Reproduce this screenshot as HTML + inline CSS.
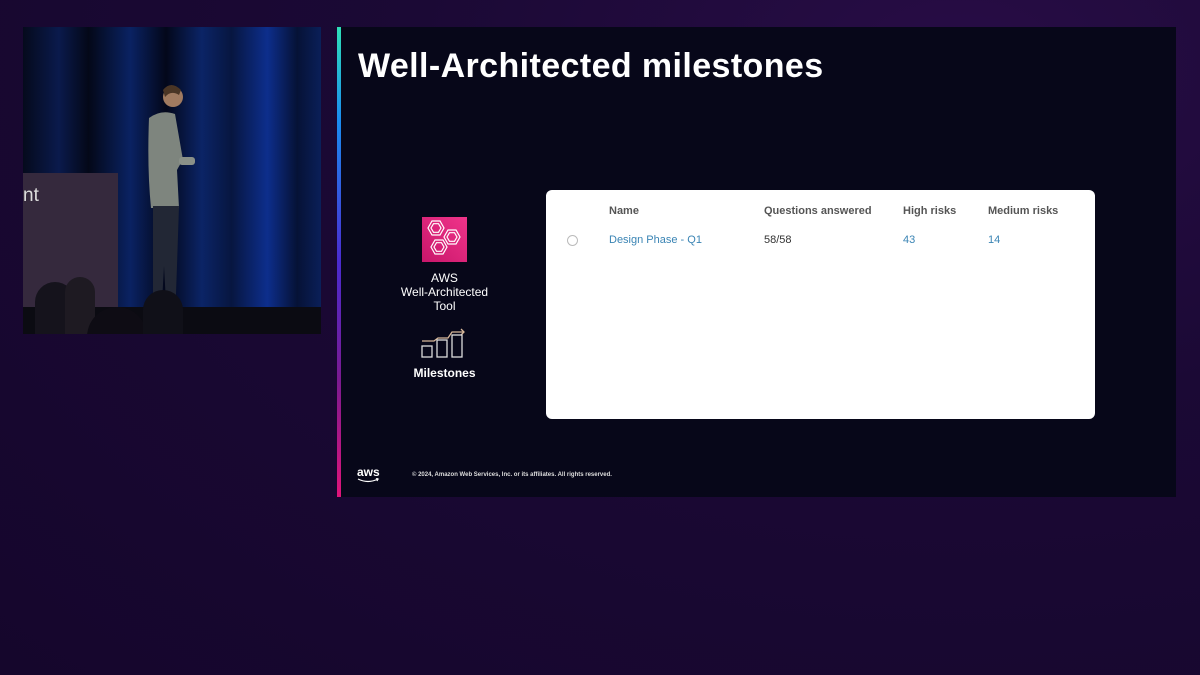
<!DOCTYPE html>
<html><head><meta charset="utf-8"><style>
*{margin:0;padding:0;box-sizing:border-box}
body{width:1200px;height:675px;overflow:hidden;font-family:"Liberation Sans",sans-serif;
background:radial-gradient(ellipse at 80% 10%,#280d46 0%,#1b0935 40%,#15062c 100%);position:relative}
.video{position:absolute;left:23px;top:27px;width:298px;height:307px;overflow:hidden;
background:linear-gradient(90deg,#050a1c 0%,#0a1a4c 12%,#040818 22%,#0a2262 36%,#03071a 48%,#0b2466 60%,#071640 70%,#0d2e8c 82%,#061236 92%,#0a1f58 100%)}
.video .floor{position:absolute;left:0;top:280px;width:298px;height:27px;background:#0b0b12}
.podium{position:absolute;left:0;top:146px;width:95px;height:161px;background:#35293d}
.podium span{position:absolute;left:0;top:12px;color:#ddd;font-size:19px}
.person{position:absolute;left:120px;top:55px}
.slide{position:absolute;left:337px;top:27px;width:839px;height:470px;background:#070719}
.bar{position:absolute;left:0;top:0;width:4px;height:470px;background:linear-gradient(#2ee0b8 0%,#1a8cf0 20%,#4a2bd0 50%,#7a1a90 75%,#e0147a 100%)}
h1{position:absolute;left:21px;top:20px;color:#fff;font-size:34px;font-weight:bold;letter-spacing:0.4px}
.icon{position:absolute;left:85px;top:190px;width:45px;height:45px;background:linear-gradient(45deg,#c8166a,#f0348a)}
.lbl{position:absolute;color:#fff;font-size:12px;text-align:center;line-height:14px}
.card{position:absolute;left:209px;top:163px;width:549px;height:229px;background:#fff;border-radius:6px}
.card div{position:absolute;font-size:11px}
.h{color:#555;font-weight:bold}
.lnk{color:#3a84b4}
.radio{width:11px;height:11px;border:1px solid #bbb;border-radius:50%}
.foot{position:absolute;left:75px;top:445px;color:#ddd;font-size:6px;font-weight:bold}
</style></head><body>
<div class="video">
 <div class="podium"><span>nt</span></div>
 <div class="floor"></div>
 <svg class="person" width="80" height="250" viewBox="0 0 80 250">
  <circle cx="30" cy="15" r="10" fill="#a07a60"/>
  <path d="M20 8 q8-10 18 0 l-2 5 q-8-5-14 2z" fill="#4a3525"/>
  <path d="M6 36 q12-9 26-4 l8 46 q-4 6 -6 10 l2 38 l-28 0 q-4-40 -2-90z" fill="#7e857e"/>
  <rect x="36" y="75" width="16" height="8" rx="3" fill="#8a9088"/>
  <path d="M10 124 l26 0 l-2 60 l-2 55 l-8 0 l-3-55 l-3 55 l-8 0z" fill="#222735"/>
 </svg>
 <div style="position:absolute;left:12px;top:255px;width:40px;height:52px;border-radius:20px 20px 0 0;background:#15131c"></div>
 <div style="position:absolute;left:42px;top:250px;width:30px;height:57px;border-radius:15px 15px 0 0;background:#1e1a22"></div>
 <div style="position:absolute;left:64px;top:280px;width:60px;height:30px;border-radius:30px 30px 0 0;background:#0e0c14"></div>
 <div style="position:absolute;left:120px;top:263px;width:40px;height:44px;border-radius:20px 20px 0 0;background:#101018"></div>
</div>
<div class="slide">
 <div class="bar"></div>
 <h1>Well-Architected milestones</h1>
 <div class="icon"><svg width="45" height="45" viewBox="0 0 45 45" fill="none" stroke="#fff" stroke-width="1.2">
  <g transform="translate(14 11)"><path d="M-4 -7 L4 -7 8 0 4 7 -4 7 -8 0z"/><path d="M-2.5 -4.3 L2.5 -4.3 5 0 2.5 4.3 -2.5 4.3 -5 0z"/></g>
  <g transform="translate(30 20)"><path d="M-4 -7 L4 -7 8 0 4 7 -4 7 -8 0z"/><path d="M-2.5 -4.3 L2.5 -4.3 5 0 2.5 4.3 -2.5 4.3 -5 0z"/></g>
  <g transform="translate(17 30)"><path d="M-4 -7 L4 -7 8 0 4 7 -4 7 -8 0z"/><path d="M-2.5 -4.3 L2.5 -4.3 5 0 2.5 4.3 -2.5 4.3 -5 0z"/></g>
 </svg></div>
 <div class="lbl" style="left:50px;top:244px;width:115px">AWS<br>Well-Architected<br>Tool</div>
 <svg style="position:absolute;left:83px;top:298px" width="48" height="34" viewBox="0 0 48 34" fill="none" stroke-width="1.3">
  <path d="M2 16 h12 l4-3 h10 l4-6 h12" stroke="#d8b89a"/><path d="M41 4 l3 3 -3 3" stroke="#d8b89a"/>
  <rect x="2" y="21" width="10" height="11" stroke="#ddd"/><rect x="17" y="15" width="10" height="17" stroke="#ddd"/><rect x="32" y="10" width="10" height="22" stroke="#ddd"/>
 </svg>
 <div class="lbl" style="left:50px;top:339px;width:115px;font-weight:bold">Milestones</div>
 <div class="card">
  <div class="h" style="left:63px;top:15px">Name</div>
  <div class="h" style="left:218px;top:15px">Questions answered</div>
  <div class="h" style="left:357px;top:15px">High risks</div>
  <div class="h" style="left:442px;top:15px">Medium risks</div>
  <div class="radio" style="left:21px;top:45px"></div>
  <div class="lnk" style="left:63px;top:44px">Design Phase - Q1</div>
  <div style="left:218px;top:44px;color:#333">58/58</div>
  <div class="lnk" style="left:357px;top:44px">43</div>
  <div class="lnk" style="left:442px;top:44px">14</div>
 </div>
 <div style="position:absolute;left:20px;top:439px;color:#fff;font-size:12px;font-weight:bold;line-height:12px">aws</div>
 <svg style="position:absolute;left:20px;top:451px" width="24" height="6"><path d="M1 1 q10 5 20 0 l-2 -1 m2 1 l-1 2" stroke="#fff" fill="none" stroke-width="1.2"/></svg>
 <div class="foot">© 2024, Amazon Web Services, Inc. or its affiliates. All rights reserved.</div>
</div>
</body></html>
